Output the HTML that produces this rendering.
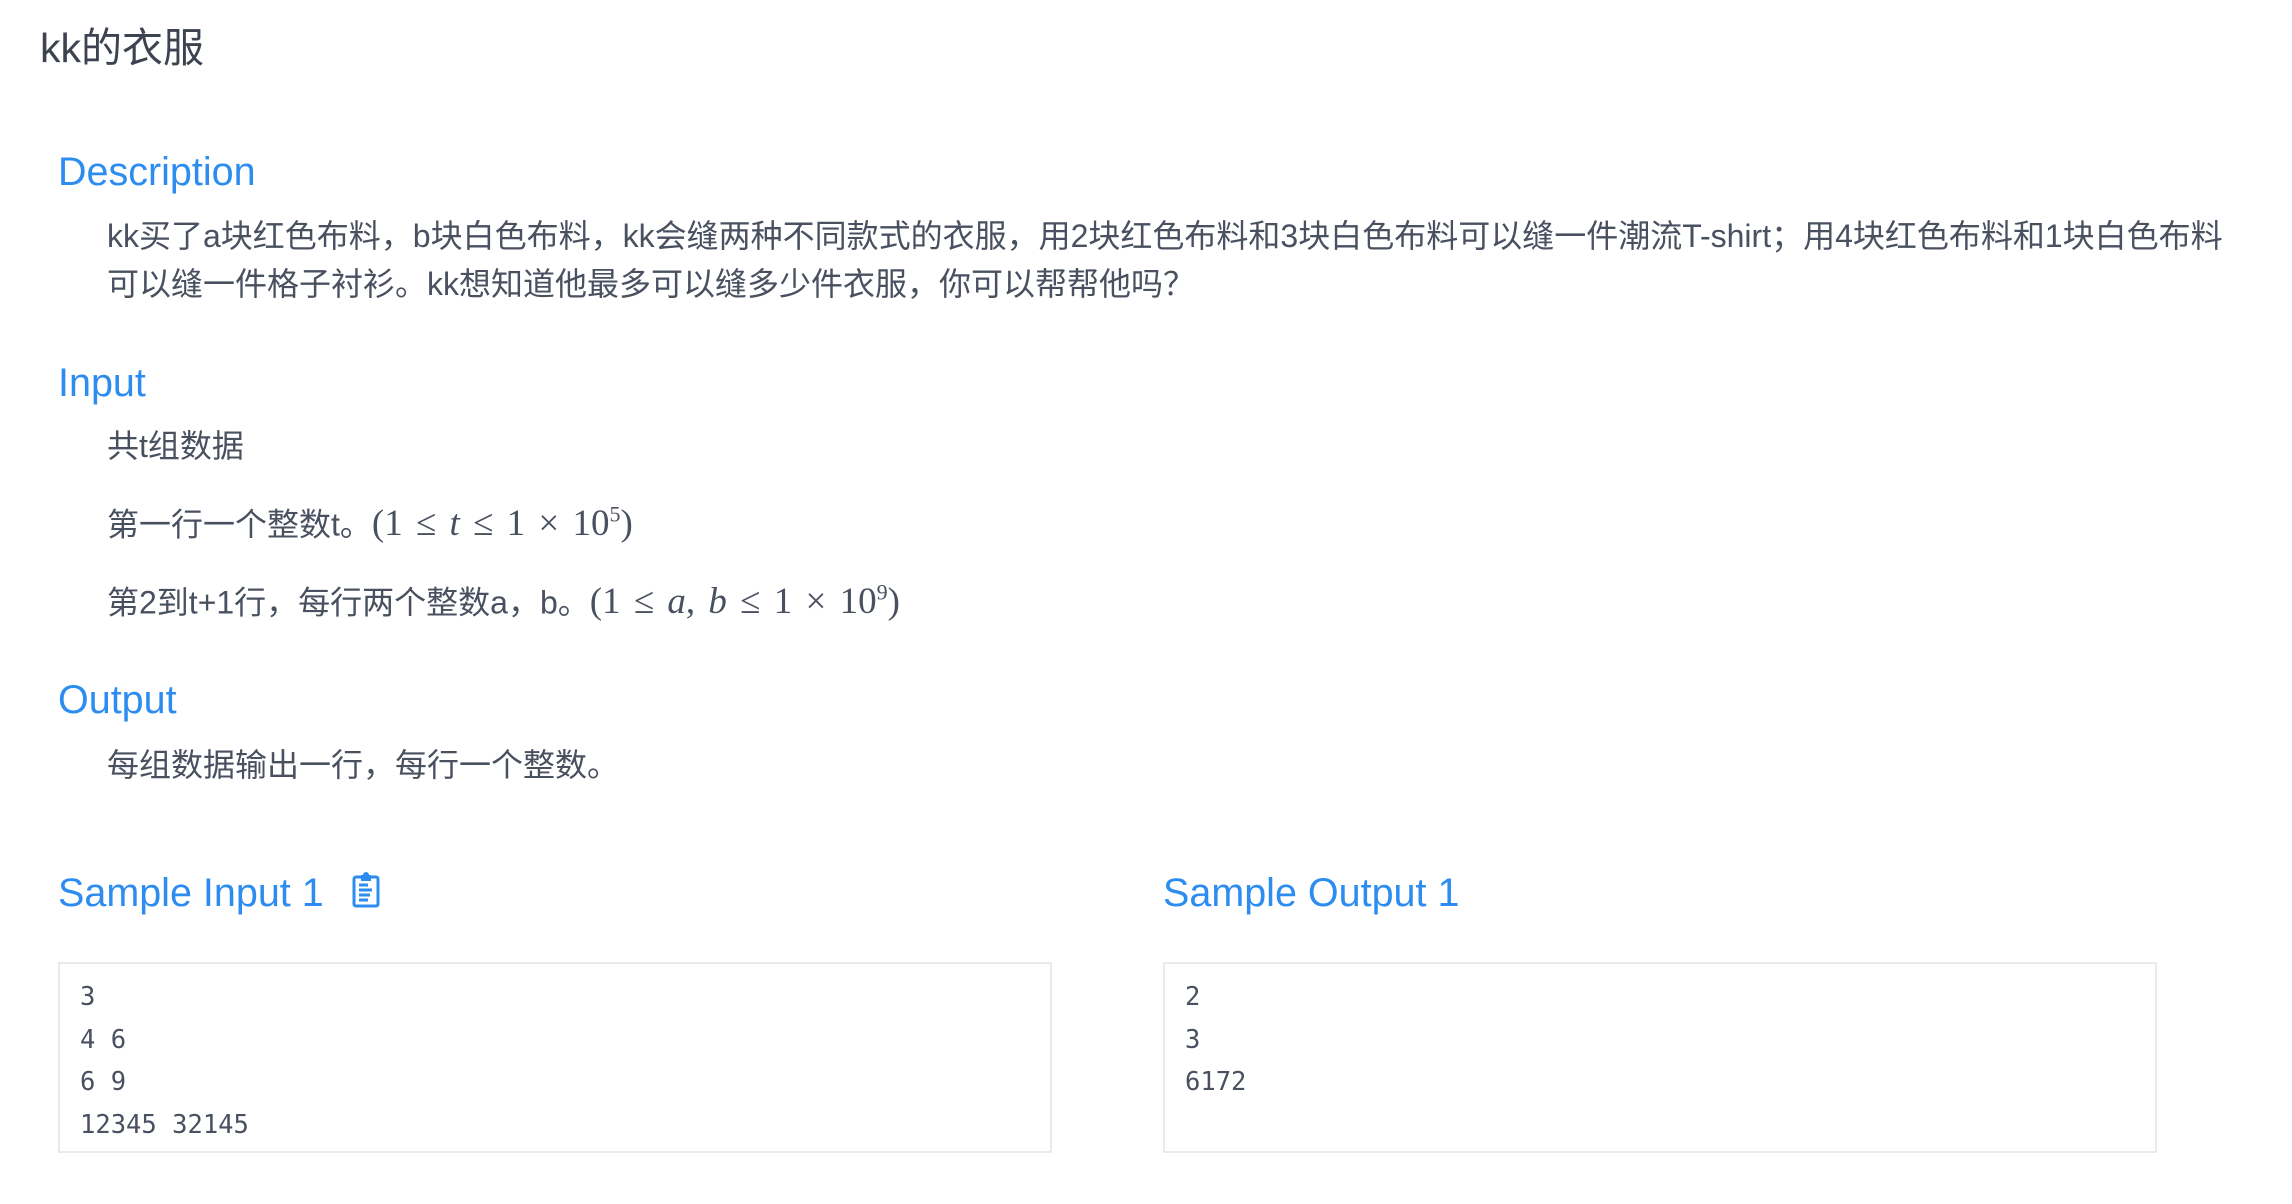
<!DOCTYPE html>
<html><head><meta charset="utf-8"><style>
body{margin:0;width:2292px;height:1204px;background:#fff;position:relative;overflow:hidden;font-family:"Liberation Sans","Noto Sans CJK SC",sans-serif;color:#495060}
.a{position:absolute;white-space:nowrap}
.h{color:#2d8cf0;font-size:39.5px;line-height:48px}
.t{font-size:32px;line-height:48px;left:107px}
.m{font-family:"Liberation Serif",serif;font-size:37px;word-spacing:4px}
.box{position:absolute;top:962px;height:191px;border:2px solid #e8eaec;box-sizing:border-box;width:994px}
.pre{position:absolute;left:20px;top:12px;font-family:"DejaVu Sans Mono","Liberation Mono",monospace;font-size:25.5px;line-height:42.5px;white-space:pre;color:#495060}
</style></head><body>
<div class="a" style="left:40px;top:22px;font-size:41px;line-height:52px;color:#3d4350">kk的衣服</div>
<div class="a h" style="left:58px;top:148px">Description</div>
<div class="a t" style="top:212px">kk买了a块红色布料，b块白色布料，kk会缝两种不同款式的衣服，用2块红色布料和3块白色布料可以缝一件潮流T-shirt；用4块红色布料和1块白色布料</div>
<div class="a t" style="top:260px">可以缝一件格子衬衫。kk想知道他最多可以缝多少件衣服，你可以帮帮他吗？</div>
<div class="a h" style="left:58px;top:359px">Input</div>
<div class="a t" style="top:422px">共t组数据</div>
<div class="a t" style="top:491px">第一行一个整数t。<span class="m">(1 ≤ <i>t</i> ≤ 1 × 10<sup style="font-size:22px">5</sup>)</span></div>
<div class="a t" style="top:569px">第2到t+1行，每行两个整数a，b。<span class="m">(1 ≤ <i>a</i>, <i>b</i> ≤ 1 × 10<sup style="font-size:22px">9</sup>)</span></div>
<div class="a h" style="left:58px;top:676px">Output</div>
<div class="a t" style="top:741px">每组数据输出一行，每行一个整数。</div>
<div class="a h" style="left:58px;top:869px">Sample Input 1</div>
<svg class="a" style="left:352px;top:872px" width="28" height="36" viewBox="0 0 28 36"><rect x="2" y="5" width="24" height="29" rx="2" fill="none" stroke="#2d8cf0" stroke-width="3"/><path d="M9 3h10v6H9z" fill="#2d8cf0"/><circle cx="14" cy="3" r="3" fill="#2d8cf0"/><path d="M7 13h9M7 18h13M7 23h11M7 28h9" stroke="#2d8cf0" stroke-width="3"/></svg>
<div class="a h" style="left:1163px;top:869px">Sample Output 1</div>
<div class="box" style="left:58px"><div class="pre">3
4 6
6 9
12345 32145</div></div>
<div class="box" style="left:1163px"><div class="pre">2
3
6172</div></div>
</body></html>
